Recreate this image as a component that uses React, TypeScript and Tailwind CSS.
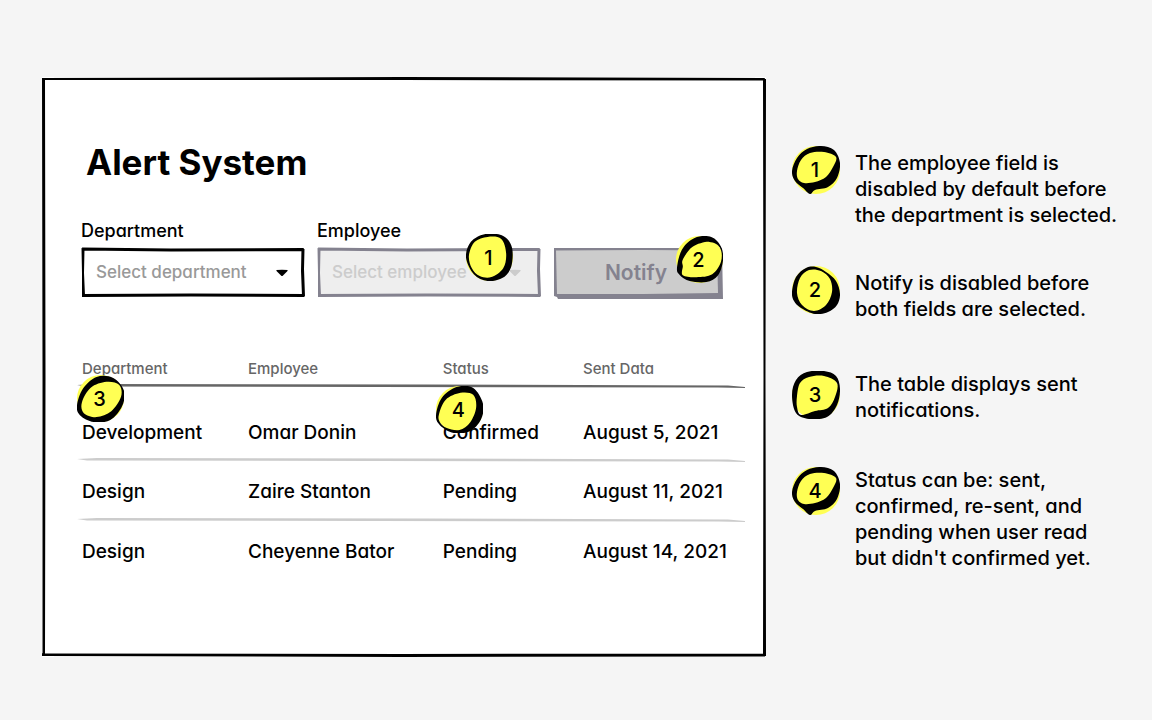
import type { ReactNode } from 'react';

type Point = [number, number];
type BlobName = 'tail' | 'oval' | 'square' | 'thickRight' | 'tilted' | 'leaning' | 'heavy';

// Each blob is a black outline with a hole, drawn in a 48x48 box
const blobs: Record<BlobName, { outer: Point[]; inner: Point[] }> = {
    tail: {
        outer: [[0, 25], [5, 12], [15, 3], [29, 0], [42, 4], [48, 17], [45, 32], [36, 41], [23, 44], [18, 48], [11, 42], [3, 35]],
        inner: [[5, 25], [9, 14], [18, 7], [32, 6], [44, 11], [41, 21], [34, 31], [23, 36], [12, 37], [6, 33]],
    },
    oval: {
        outer: [[0, 26], [4, 11], [14, 2], [24, 1], [34, 6], [44, 15], [48, 28], [45, 39], [36, 46], [23, 48], [9, 42], [2, 35]],
        inner: [[5, 27], [8, 12], [17, 4], [29, 5], [38, 13], [40, 26], [34, 39], [22, 45], [10, 39]],
    },
    square: {
        outer: [[0, 24], [4, 9], [15, 1], [32, 0], [44, 5], [48, 18], [45, 34], [35, 46], [17, 48], [4, 42]],
        inner: [[5, 25], [8, 12], [17, 6], [32, 5], [45, 12], [43, 26], [36, 37], [23, 40], [9, 44], [5, 36]],
    },
    thickRight: {
        outer: [[0, 24], [5, 8], [20, 0], [38, 2], [47, 14], [46, 34], [37, 45], [22, 48], [8, 41]],
        inner: [[3, 22], [9, 8], [22, 3], [36, 5], [41, 20], [38, 35], [26, 44], [14, 43], [6, 35]],
    },
    tilted: {
        outer: [[1, 33], [6, 14], [19, 2], [36, 1], [46, 11], [48, 25], [43, 40], [31, 47], [14, 46], [4, 40]],
        inner: [[7, 24], [17, 11], [34, 6], [45, 12], [46, 26], [37, 39], [21, 42], [7, 40], [7, 31]],
    },
    leaning: {
        outer: [[0, 31], [6, 14], [20, 2], [37, 3], [48, 16], [46, 32], [34, 46], [17, 48], [3, 41]],
        inner: [[5, 28], [14, 13], [30, 7], [43, 10], [45, 22], [35, 37], [20, 43], [7, 39]],
    },
    heavy: {
        outer: [[0, 30], [6, 12], [21, 1], [38, 2], [48, 18], [46, 34], [35, 46], [18, 48], [4, 40]],
        inner: [[3, 29], [10, 14], [25, 7], [38, 9], [41, 22], [35, 37], [24, 45], [11, 43], [4, 37]],
    },
};

// Closed smooth curve through all the points
function smooth(points: Point[]) {
    const n = points.length;
    const parts = points.map((p, i) => {
        const prev = points[(i - 1 + n) % n];
        const next = points[(i + 1) % n];
        const after = points[(i + 2) % n];
        const c1 = `${p[0] + (next[0] - prev[0]) / 6} ${p[1] + (next[1] - prev[1]) / 6}`;
        const c2 = `${next[0] - (after[0] - p[0]) / 6} ${next[1] - (after[1] - p[1]) / 6}`;
        return `C${c1} ${c2} ${next[0]} ${next[1]}`;
    });
    return `M${points[0][0]} ${points[0][1]}${parts.join('')}Z`;
}

function Badge({ label, blob, className = '' }: { label: string; blob: BlobName; className?: string }) {
    const { outer, inner } = blobs[blob];

    return (
        <span className={`grid place-items-center text-xl font-medium leading-none text-black ${className}`}>
            <svg viewBox="0 0 48 48" className="col-start-1 row-start-1 size-full" aria-hidden="true">
                <circle cx="24" cy="24" r="24" fill="#ffff54" />
                <path d={smooth(outer) + smooth(inner)} fillRule="evenodd" />
            </svg>
            <span className="z-10 col-start-1 row-start-1 pr-0.5">{label}</span>
        </span>
    );
}

// Hand-drawn rectangle that stretches with its parent
function Frame({ className, fill = 'none' }: { className: string; fill?: string }) {
    return (
        <svg
            viewBox="0 0 224 50"
            preserveAspectRatio="none"
            className={`pointer-events-none absolute inset-0 size-full overflow-visible ${className}`}
            aria-hidden="true"
        >
            <path d="M1 2L222 2L223 25L222 48.500L2 48.500L1 30Z" fill={fill} />
            <path
                d="M1 0.500L90 1.500L223 1L221.500 4L90 4.500L2 3.500ZM0.500 1L3.500 2L3 26L4 49L1 49.500L1 26ZM220.500 1.500L223.500 2L223 22L224 49.500L221 49L220 24ZM1 47L110 46.500L223.500 47L223 50L110 49.500L1 50Z"
                fill="currentColor"
            />
        </svg>
    );
}

function Rule({ className }: { className: string }) {
    return (
        <svg
            viewBox="0 0 667 4"
            preserveAspectRatio="none"
            className={`absolute -bottom-px left-0 h-1 w-full ${className}`}
            aria-hidden="true"
        >
            <path d="M0 1L20 0L350 0.500L650 1.500L667 3L667 4L640 3.500L300 3L10 2.500Z" fill="currentColor" />
        </svg>
    );
}

function SelectField({ id, label, placeholder, disabled = false, children }: {
    id: string;
    label: string;
    placeholder: string;
    disabled?: boolean;
    children?: ReactNode;
}) {
    return (
        <div>
            <label htmlFor={id} className="block text-lg leading-[26px]">{label}</label>
            <div className="relative mt-[3px] h-[50px]">
                <Frame className={disabled ? 'text-[#84828f]' : 'text-black'} fill={disabled ? '#eeeeee' : '#ffffff'} />
                <select
                    id={id}
                    disabled={disabled}
                    className={`relative h-full w-full appearance-none bg-transparent px-[15px] pt-0.5 text-[17px] disabled:opacity-100 ${
                        disabled ? 'text-[#cccccc]' : 'text-[#999999]'
                    }`}
                >
                    <option>{placeholder}</option>
                </select>
                <svg
                    viewBox="0 0 12 8"
                    className={`pointer-events-none absolute top-[22px] h-2 w-3 ${disabled ? 'right-5 text-[#cccccc]' : 'right-[17px] text-black'}`}
                    aria-hidden="true"
                >
                    <path d="M0.500 1Q6 0.500 11.500 1Q12 1.500 11 2.500L7 6.500Q6 7.500 5 6.500L1 2.500Q0 1.500 0.500 1Z" fill="currentColor" />
                </svg>
                {children}
            </div>
        </div>
    );
}

const rows = [
    { department: 'Development', employee: 'Omar Donin', status: 'Confirmed', sent: 'August 5, 2021' },
    { department: 'Design', employee: 'Zaire Stanton', status: 'Pending', sent: 'August 11, 2021' },
    { department: 'Design', employee: 'Cheyenne Bator', status: 'Pending', sent: 'August 14, 2021' },
];

const notes: { label: string; blob: BlobName; text: string; item: string; copy: string }[] = [
    { label: '1', blob: 'tail', text: 'The employee field is\ndisabled by default before\nthe department is selected.', item: '', copy: 'pt-1' },
    { label: '2', blob: 'oval', text: 'Notify is disabled before\nboth fields are selected.', item: 'mt-[38px]', copy: 'pt-1' },
    { label: '3', blob: 'square', text: 'The table displays sent\nnotifications.', item: 'mt-[49px]', copy: '' },
    { label: '4', blob: 'tail', text: "Status can be: sent,\nconfirmed, re-sent, and\npending when user read\nbut didn't confirmed yet.", item: 'mt-11', copy: '' },
];

export default function App() {
    return (
        <div className="flex min-h-screen items-start gap-[26px] bg-[#f5f5f5] pb-16 pl-[42px] pr-[26px] pt-[77px] font-['Inter',sans-serif] font-medium text-black [font-feature-settings:'cv11']">
            <main className="relative min-w-0 flex-1 bg-white pb-[76px] pt-16">
                <svg
                    viewBox="0 0 724 580"
                    preserveAspectRatio="none"
                    className="pointer-events-none absolute inset-0 size-full"
                    aria-hidden="true"
                >
                    <path d="M0 1L360 0L723 1L722 3.500L360 3L0 3ZM0 1L3 1L3.500 300L3 579L0.500 579L0.500 300ZM721 1L724 2L723.500 300L724 579L721 579L721.500 300ZM0 576.500L360 577L724 576.500L723 579.500L360 580L0 579Z" />
                </svg>

                <h1 className="ml-11 text-[35px] font-bold leading-[42px]">Alert System</h1>

                {/* Form */}
                <form className="mt-[35px] grid grid-cols-[224fr_224fr_170fr] items-end gap-3 pl-[39px] pr-[43px]">
                    <SelectField id="department" label="Department" placeholder="Select department" />
                    <SelectField id="employee" label="Employee" placeholder="Select employee" disabled>
                        <Badge label="1" blob="thickRight" className="absolute -top-[13px] right-[28px] size-[47px]" />
                    </SelectField>
                    <div className="relative h-[50px]">
                        <button
                            type="button"
                            disabled
                            className="relative h-[52px] w-full pr-1 text-[21px] font-semibold text-[#84828f]"
                        >
                            <svg
                                viewBox="0 0 170 52"
                                preserveAspectRatio="none"
                                className="absolute inset-0 size-full"
                                aria-hidden="true"
                            >
                                <path d="M1 1L169 1L170 52L5 52L4 50L1 49Z" fill="#84828f" />
                                <path d="M3 3.500L90 3L164 3.500L165 46L90 47L4 47Z" fill="#cccccc" />
                            </svg>
                            <span className="relative">Notify</span>
                        </button>
                        <Badge label="2" blob="tilted" className="absolute -top-[11px] right-0 size-[47px]" />
                    </div>
                </form>

                {/* Sent notifications */}
                <div className="mt-[55px] pl-[35px] pr-[21px]">
                    <table className="w-full table-fixed text-left text-[19px] leading-[26px]">
                        <thead>
                            <tr className="relative h-[35px] text-[15px] text-[#666666]">
                                <th className="w-[25%] pb-0.5 pl-[5px] font-medium">
                                    Department
                                    <Rule className="text-[#666666]" />
                                    <Badge label="3" blob="leaning" className="absolute left-0 top-[23px] z-10 size-[47px]" />
                                </th>
                                <th className="w-[29%] pb-0.5 pl-1 font-medium">Employee</th>
                                <th className="relative w-[21%] pb-0.5 pl-[5px] font-medium">
                                    Status
                                    <Badge label="4" blob="heavy" className="absolute -left-0.5 top-[34px] z-10 size-[47px]" />
                                </th>
                                <th className="pb-0.5 pl-[5px] font-medium">Sent Data</th>
                            </tr>
                        </thead>
                        <tbody>
                            {rows.map((row, i) => (
                                <tr key={row.employee} className={`relative ${i === 0 ? 'h-[74px]' : 'h-[60px]'}`}>
                                    <td className={`pl-[5px] ${i === 0 ? 'pt-[18px]' : 'pt-0.5'}`}>
                                        {row.department}
                                        {i < rows.length - 1 && <Rule className="text-[#cccccc]" />}
                                    </td>
                                    <td className={`pl-1 ${i === 0 ? 'pt-[18px]' : 'pt-0.5'}`}>{row.employee}</td>
                                    <td className={`pl-[5px] ${i === 0 ? 'pt-[18px]' : 'pt-0.5'}`}>{row.status}</td>
                                    <td className={`pl-[5px] ${i === 0 ? 'pt-[18px]' : 'pt-0.5'}`}>{row.sent}</td>
                                </tr>
                            ))}
                        </tbody>
                    </table>
                </div>
            </main>

            {/* Notes */}
            <aside className="w-[334px] shrink-0 pt-[69px]">
                <ol>
                    {notes.map((note) => (
                        <li key={note.label} className={`flex items-start gap-[15px] ${note.item}`}>
                            <Badge label={note.label} blob={note.blob} className="size-12 shrink-0" />
                            <p className={`whitespace-pre text-xl leading-[26px] ${note.copy}`}>{note.text}</p>
                        </li>
                    ))}
                </ol>
            </aside>
        </div>
    );
}
